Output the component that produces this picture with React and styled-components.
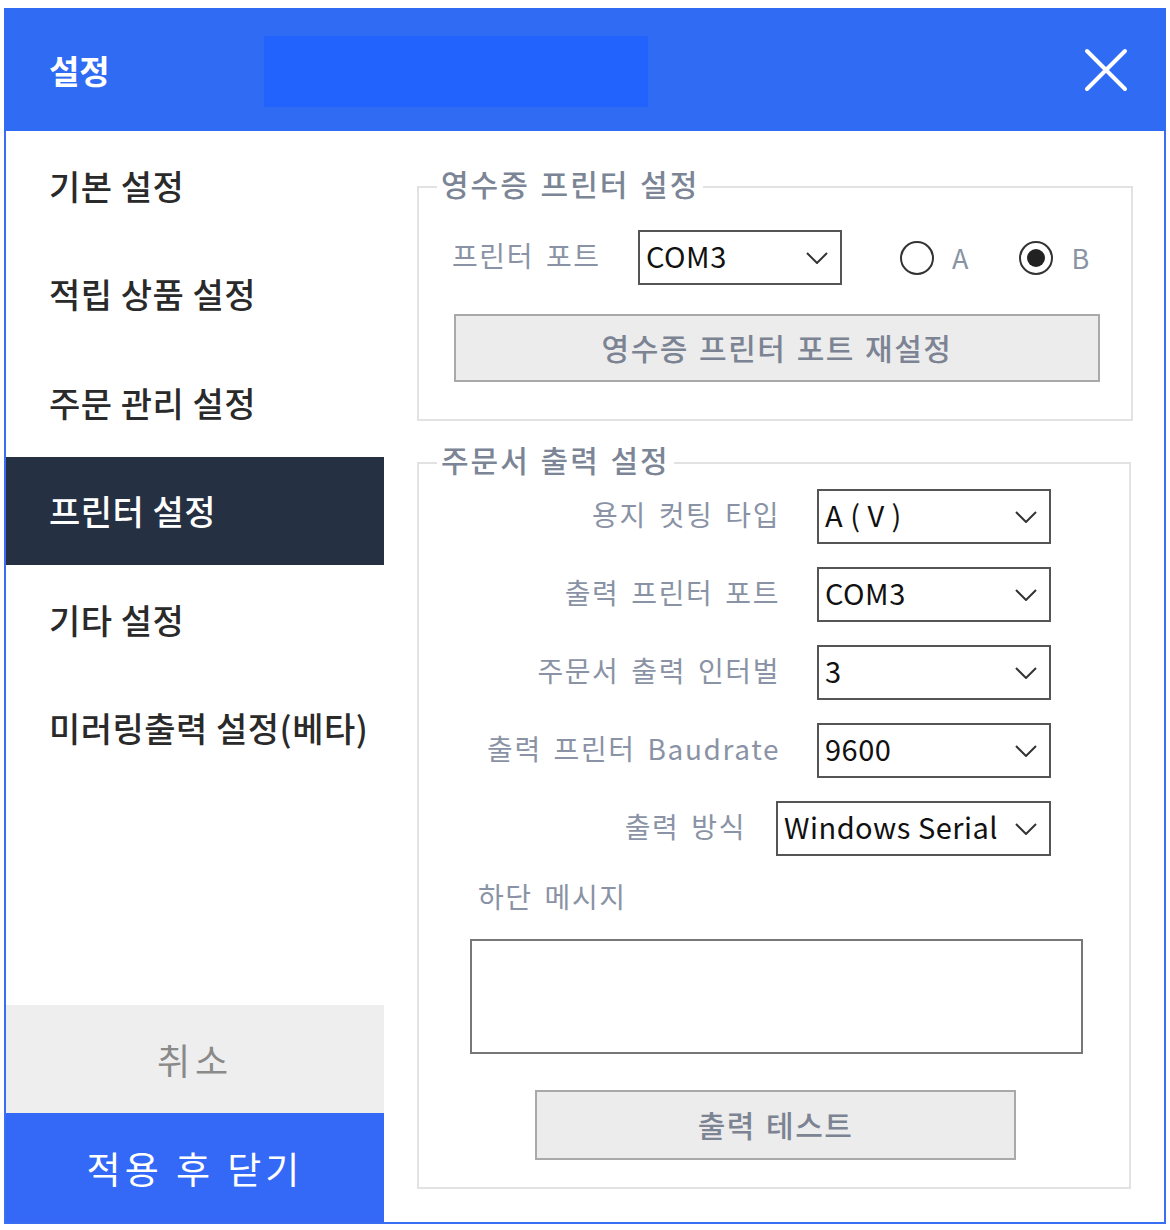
import React from "react";
import styled, { createGlobalStyle } from "styled-components";

const Global = createGlobalStyle`
  html, body { margin: 0; padding: 0; background: #ffffff; }
  body { font-family: "Noto Sans CJK KR", "Noto Sans", sans-serif; }
  * { box-sizing: border-box; }
`;

const Page = styled.div`
  padding: 8px 4px 6px 4px;
`;

const Window = styled.div`
  width: 1162px;
  height: 1216px;
  border: 2px solid #3a6ef5;
  border-top: none;
  display: flex;
  flex-direction: column;
  background: #fff;
`;

const Header = styled.header`
  height: 123px;
  margin: 0 -2px;
  background: #306bf3;
  display: flex;
  align-items: center;
  padding: 0 36px 0 45px;
`;

const Title = styled.h1`
  margin: 0;
  color: #fff;
  font-size: 33px;
  font-weight: 700;
  width: 215px;
`;

const TitleField = styled.div`
  width: 384px;
  height: 71px;
  background: #2263fe;
  margin-top: 3px;
`;

const CloseButton = styled.button`
  margin-left: auto;
  width: 48px;
  height: 48px;
  border: none;
  background: transparent;
  padding: 0;
  display: flex;
  align-items: center;
  justify-content: center;
`;

const Body = styled.div`
  flex: 1;
  display: flex;
  min-height: 0;
`;

const Sidebar = styled.nav`
  width: 378px;
  display: flex;
  flex-direction: column;
`;

const NavItem = styled.div`
  height: 108.5px;
  display: flex;
  align-items: center;
  padding-left: 43px;
  font-size: 34px;
  font-weight: 500;
  color: ${(p) => (p.$active ? "#ffffff" : "#2a2a2a")};
  background: ${(p) => (p.$active ? "#253142" : "transparent")};
  letter-spacing: 0.5px;
`;

const Spacer = styled.div`
  flex: 1;
`;

const FooterButton = styled.button`
  height: ${(p) => p.$h}px;
  border: none;
  font-family: inherit;
  font-size: ${(p) => (p.$primary ? 37 : 36)}px;
  font-weight: 400;
  color: ${(p) => (p.$primary ? "#ffffff" : "#8a8a8a")};
  background: ${(p) => (p.$primary ? "#3369f6" : "#eeeeee")};
  letter-spacing: ${(p) => (p.$primary ? 4 : 5)}px;
  word-spacing: 1px;
`;

const Content = styled.main`
  flex: 1;
  padding: 35px 31px 0 33px;
  display: flex;
  flex-direction: column;
  gap: 21px;
`;

const Group = styled.fieldset`
  margin: 0;
  border: 2px solid #e2e2e2;
  padding: ${(p) => p.$pad};
  min-width: 0;
  width: ${(p) => p.$w}px;
  display: flex;
  flex-direction: column;
`;

const Legend = styled.legend`
  margin-left: 18px;
  padding: 0 4px 8px 4px;
  font-size: 30px;
  line-height: 34px;
  color: #7b8595;
  font-weight: 500;
  letter-spacing: 2px;
  word-spacing: 2px;
`;

const PortRow = styled.div`
  display: flex;
  align-items: center;
  padding-left: 33px;
`;

const Label = styled.span`
  font-size: 28px;
  color: #8a93a5;
  white-space: nowrap;
  letter-spacing: 1.6px;
  word-spacing: 4px;
  padding-bottom: 6px;
  ${(p) => (p.$w ? `width: ${p.$w}px; flex-shrink: 0;` : "")}
`;

const Select = styled.div`
  width: ${(p) => p.$w}px;
  height: 55px;
  border: 2px solid #555;
  display: flex;
  align-items: center;
  padding: 0 12px 0 6px;
  font-size: 29px;
  letter-spacing: 0.5px;
  color: #111;
  background: #fff;
  flex-shrink: 0;
  & > span { flex: 1; white-space: nowrap; padding-bottom: 6px; }
`;

const Radio = styled.label`
  display: flex;
  align-items: center;
  gap: 18px;
  font-size: 27px;
  color: #8a93a5;
  margin-left: ${(p) => p.$ml}px;
`;

const RadioCircle = styled.span`
  width: 34px;
  height: 34px;
  border-radius: 50%;
  border: 2px solid #333;
  display: flex;
  align-items: center;
  justify-content: center;
  &::after {
    content: "";
    width: 18px;
    height: 18px;
    border-radius: 50%;
    background: ${(p) => (p.$checked ? "#222" : "transparent")};
  }
`;

const GrayButton = styled.button`
  width: ${(p) => p.$w}px;
  height: ${(p) => p.$h}px;
  margin-left: ${(p) => p.$ml}px;
  margin-top: ${(p) => p.$mt}px;
  background: #ececec;
  border: 2px solid #a9a9a9;
  font-family: inherit;
  font-size: 30px;
  font-weight: 500;
  color: #7c8494;
  letter-spacing: 1.5px;
  word-spacing: 2px;
  padding-bottom: 4px;
`;

const FormRow = styled.div`
  display: flex;
  align-items: center;
  justify-content: flex-end;
  gap: ${(p) => p.$gap}px;
  padding-right: 78px;
  height: 55px;
`;

const Rows = styled.div`
  display: flex;
  flex-direction: column;
  gap: 23px;
`;

const MessageLabel = styled(Label)`
  margin: 20px 0 0 59px;
`;

const TextArea = styled.div`
  width: 613px;
  height: 115px;
  border: 2px solid #777;
  margin: 17px 0 0 51px;
  background: #fff;
`;

function Chevron() {
  return (
    <svg width="22" height="12" viewBox="0 0 22 12" fill="none">
      <path d="M1 1 L11 11 L21 1" stroke="#333" strokeWidth="2" />
    </svg>
  );
}

function Dropdown({ w, value }) {
  return (
    <Select $w={w}>
      <span>{value}</span>
      <Chevron />
    </Select>
  );
}

const navItems = [
  "기본 설정",
  "적립 상품 설정",
  "주문 관리 설정",
  "프린터 설정",
  "기타 설정",
  "미러링출력 설정(베타)",
];

const rows = [
  { label: "용지 컷팅 타입", value: "A ( V )", w: 234, gap: 37 },
  { label: "출력 프린터 포트", value: "COM3", w: 234, gap: 37 },
  { label: "주문서 출력 인터벌", value: "3", w: 234, gap: 37 },
  { label: "출력 프린터 Baudrate", value: "9600", w: 234, gap: 37 },
  { label: "출력 방식", value: "Windows Serial", w: 275, gap: 30 },
];

export default function App() {
  return (
    <>
      <Global />
      <Page>
        <Window>
          <Header>
            <Title>설정</Title>
            <TitleField />
            <CloseButton aria-label="닫기">
              <svg width="44" height="44" viewBox="0 0 44 44">
                <path d="M3 3 L41 41 M41 3 L3 41" stroke="#fff" strokeWidth="4" strokeLinecap="round" />
              </svg>
            </CloseButton>
          </Header>
          <Body>
            <Sidebar>
              {navItems.map((t) => (
                <NavItem key={t} $active={t === "프린터 설정"}>
                  {t}
                </NavItem>
              ))}
              <Spacer />
              <FooterButton $h={108}>취소</FooterButton>
              <FooterButton $h={109} $primary>
                적용 후 닫기
              </FooterButton>
            </Sidebar>
            <Content>
              <Group $w={716} $pad="22px 0 37px 0">
                <Legend>영수증 프린터 설정</Legend>
                <PortRow>
                  <Label $w={186}>프린터 포트</Label>
                  <Dropdown w={204} value="COM3" />
                  <Radio $ml={58}>
                    <RadioCircle />A
                  </Radio>
                  <Radio $ml={51}>
                    <RadioCircle $checked />B
                  </Radio>
                </PortRow>
                <GrayButton $w={646} $h={68} $ml={35} $mt={29}>
                  영수증 프린터 포트 재설정
                </GrayButton>
              </Group>
              <Group $w={714} $pad="5px 0 27px 0">
                <Legend>주문서 출력 설정</Legend>
                <Rows>
                  {rows.map((r) => (
                    <FormRow key={r.label} $gap={r.gap}>
                      <Label>{r.label}</Label>
                      <Dropdown w={r.w} value={r.value} />
                    </FormRow>
                  ))}
                </Rows>
                <MessageLabel>하단 메시지</MessageLabel>
                <TextArea />
                <GrayButton $w={481} $h={70} $ml={116} $mt={36}>
                  출력 테스트
                </GrayButton>
              </Group>
            </Content>
          </Body>
        </Window>
      </Page>
    </>
  );
}
